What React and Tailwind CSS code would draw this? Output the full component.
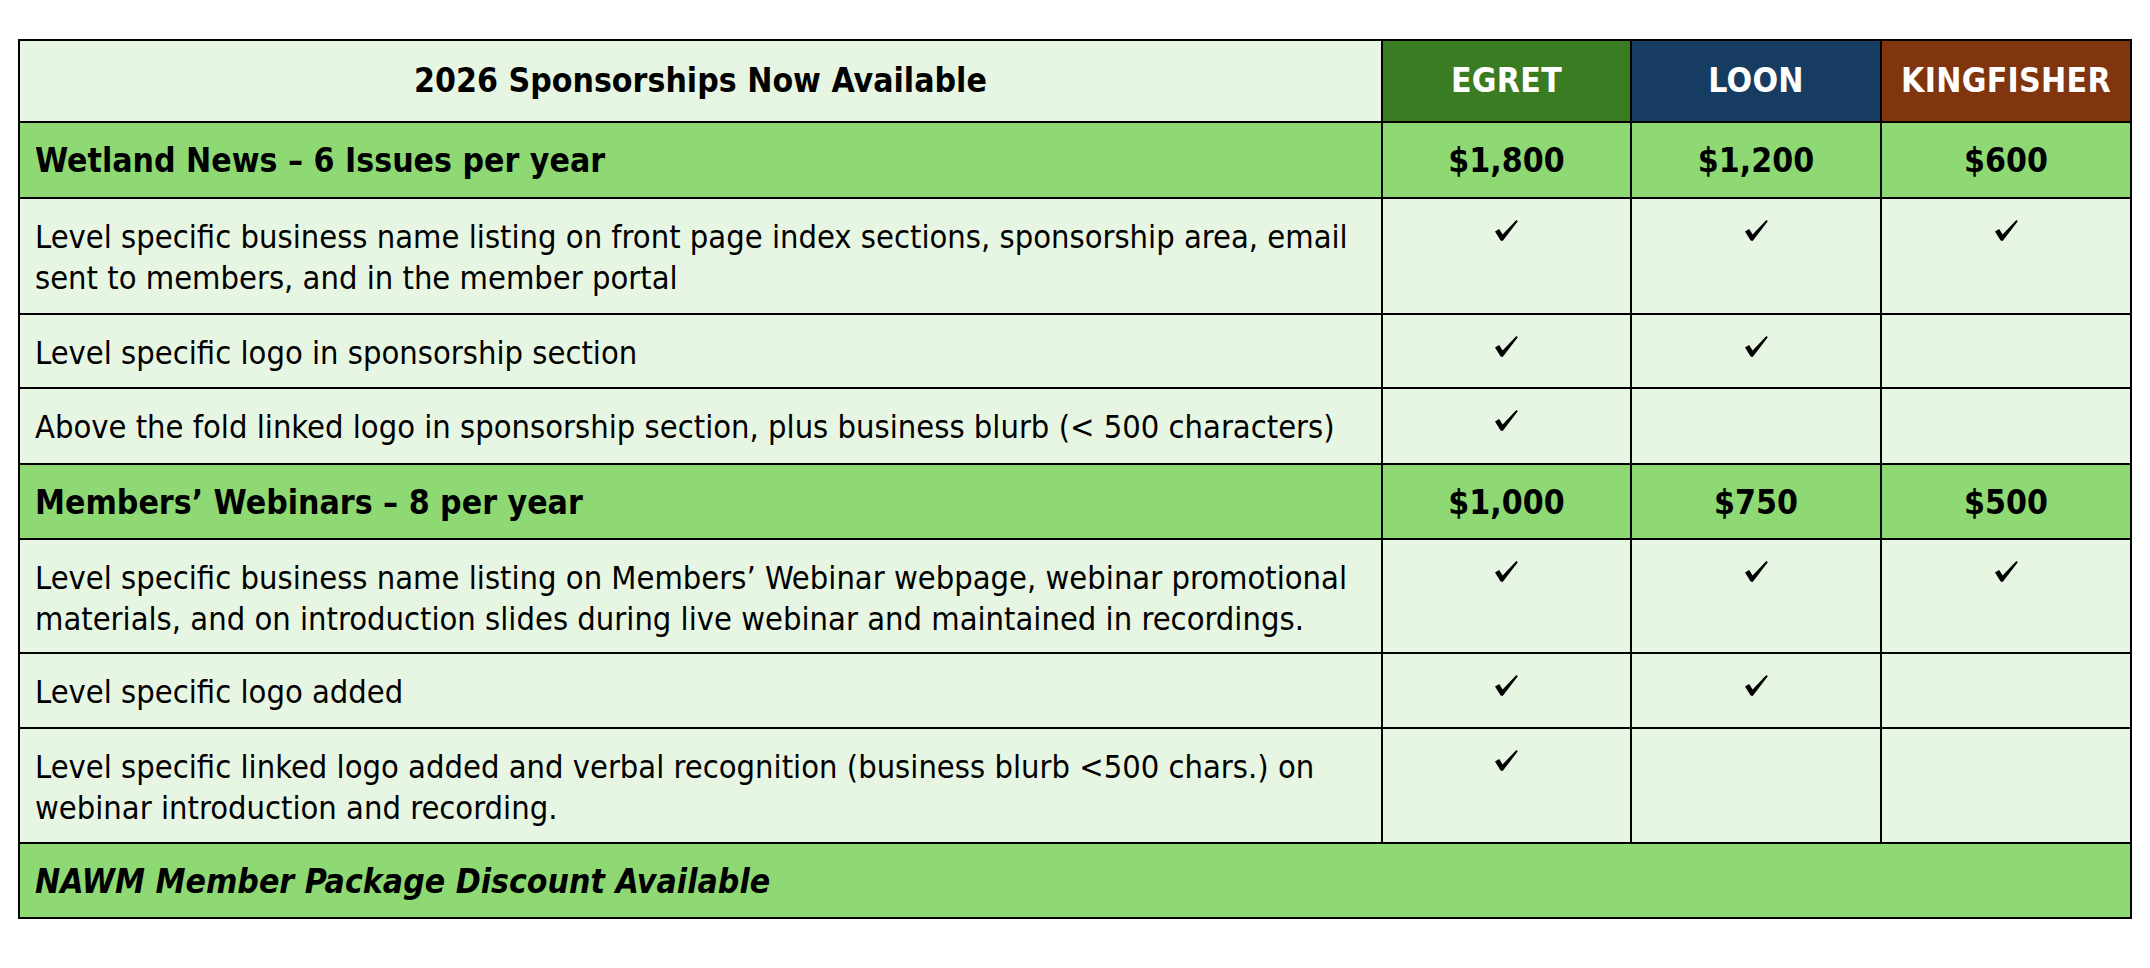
import React from 'react'

const LEVELS = [
  { name: 'EGRET', bg: 'bg-[#3a7c22]' },
  { name: 'LOON', bg: 'bg-[#173c62]' },
  { name: 'KINGFISHER', bg: 'bg-[#80350f]' },
]

const SECTIONS = [
  {
    title: 'Wetland News – 6 Issues per year',
    prices: ['$1,800', '$1,200', '$600'],
    items: [
      {
        lines: [
          'Level specific business name listing on front page index sections, sponsorship area, email',
          'sent to members, and in the member portal',
        ],
        checks: [true, true, true],
      },
      { lines: ['Level specific logo in sponsorship section'], checks: [true, true, false] },
      {
        lines: ['Above the fold linked logo in sponsorship section, plus business blurb (< 500 characters)'],
        checks: [true, false, false],
      },
    ],
  },
  {
    title: 'Members’ Webinars – 8 per year',
    prices: ['$1,000', '$750', '$500'],
    items: [
      {
        lines: [
          'Level specific business name listing on Members’ Webinar webpage, webinar promotional',
          'materials, and on introduction slides during live webinar and maintained in recordings.',
        ],
        checks: [true, true, true],
      },
      { lines: ['Level specific logo added'], checks: [true, true, false] },
      {
        lines: [
          'Level specific linked logo added and verbal recognition (business blurb <500 chars.) on',
          'webinar introduction and recording.',
        ],
        checks: [true, false, false],
      },
    ],
  },
]

function Check() {
  return (
    <svg width="23" height="21" viewBox="0 0 23 21" className="block">
      <path d="M0 11.5 L4.2 9 L7.6 14.4 L21.4 0 L22.8 1.2 L9.6 18.6 L7.6 21 L5.6 20.4 Z" fill="#000" />
    </svg>
  )
}

export default function App() {
  return (
    <div className="min-h-screen bg-white pt-[39px] pl-[18px] text-black font-['DejaVu_Sans_Condensed','DejaVu_Sans',sans-serif]">
      <div className="grid w-[2114px] gap-[2px] bg-black p-[2px] grid-cols-[1361px_247px_248px_248px] grid-rows-[80px_74px_114px_72px_74px_73px_112px_73px_113px_73px]">
        {/* Header */}
        <div className="bg-[#e7f6e2] flex items-center justify-center text-[33.5px] font-bold">
          2026 Sponsorships Now Available
        </div>
        {LEVELS.map((l) => (
          <div key={l.name} className={`${l.bg} flex items-center justify-center text-[33.5px] font-bold tracking-[0.3px] text-white`}>
            {l.name}
          </div>
        ))}

        {SECTIONS.map((s) => (
          <React.Fragment key={s.title}>
            <div className="bg-[#8ed973] flex items-center pl-[15px] pt-[3px] text-[33.5px] font-bold">{s.title}</div>
            {s.prices.map((p, i) => (
              <div key={i} className="bg-[#8ed973] flex items-center justify-center pt-[3px] text-[33.5px] font-bold">
                {p}
              </div>
            ))}
            {s.items.map((it, r) => (
              <React.Fragment key={r}>
                <div className="bg-[#e7f6e2] pl-[15px] pt-[18px] text-[32.4px] leading-[41px] whitespace-nowrap">
                  {it.lines.map((ln, k) => (
                    <div key={k}>{ln}</div>
                  ))}
                </div>
                {it.checks.map((c, i) => (
                  <div key={i} className="bg-[#e7f6e2] flex justify-center pt-[21px]">
                    {c && <Check />}
                  </div>
                ))}
              </React.Fragment>
            ))}
          </React.Fragment>
        ))}

        {/* Footer */}
        <div className="col-span-4 bg-[#8ed973] flex items-center pl-[15px] pt-[3px] text-[33.5px] font-bold italic">
          NAWM Member Package Discount Available
        </div>
      </div>
    </div>
  )
}
